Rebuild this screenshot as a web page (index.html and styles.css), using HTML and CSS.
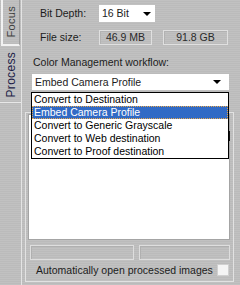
FILE: index.html
```html
<html lang="en">
<head>
    <meta charset="UTF-8">
    <title>Process</title>
    <link rel="stylesheet" href="styles.css">
</head>
<body>
    <div class="window">
        <div class="tabs">
            <div class="tab tab-focus"><span>Focus</span></div>
            <div class="tab tab-process"><span>Process</span></div>
        </div>

        <div class="panel">
            <div class="row bit-row">
                <label class="row-label">Bit Depth:</label>
                <div class="select small-select">16 Bit<i class="arrow"></i></div>
            </div>

            <div class="row size-row">
                <label class="row-label">File size:</label>
                <div class="readout readout-mb">46.9 MB</div>
                <div class="readout readout-gb">91.8 GB</div>
            </div>

            <div class="caption">Color Management workflow:</div>

            <div class="combo">
                <div class="select wide-select">Embed Camera Profile<i class="arrow"></i></div>
                <ul class="dropdown">
                    <li>Convert to Destination</li>
                    <li class="selected">Embed Camera Profile</li>
                    <li>Convert to Generic Grayscale</li>
                    <li>Convert to Web destination</li>
                    <li>Convert to Proof destination</li>
                </ul>
            </div>

            <div class="group">
                <div class="listbox"><span class="mark"></span></div>
                <div class="fields">
                    <div class="field field-left"></div>
                    <div class="field field-right"></div>
                </div>
                <div class="check-row">
                    <span>Automatically open processed images</span>
                    <span class="checkbox"></span>
                </div>
            </div>
        </div>
    </div>
</body>
</html>
```

FILE: styles.css
```css
body {
    margin: 0;
    font-family: "Liberation Sans", Arial, sans-serif;
    font-size: 10.5px;
    color: #1c1c1c;
    background: #bdbdbd;
}
.window {
    display: flex;
    width: 240px;
    height: 285px;
    overflow: hidden;
    background: repeating-linear-gradient(#c1c1c1 0 1px, #bbbbbb 1px 2px);
}
.tabs {
    width: 21px;
    flex: none;
    border-right: 1px solid #e4e4e4;
}
.tab {
    display: flex;
    align-items: center;
    justify-content: center;
    box-sizing: border-box;
}
.tab span {
    writing-mode: vertical-rl;
    transform: rotate(180deg);
    font-size: 11px;
    letter-spacing: 0.3px;
}
.tab-focus {
    height: 46px;
    margin-left: 1px;
    width: 19px;
    border-left: 2px solid #f2f2f2;
    border-bottom: 2px solid #f2f2f2;
    border-right: 1px solid #9c9c9c;
    color: #404040;
}
.tab-process {
    height: 57px;
    width: 21px;
    border-bottom: 1px solid #e8e8e8;
    color: #1e1e48;
    padding-top: 2px;
}
.tab-process span {
    font-size: 12px;
}
.panel {
    flex: 1;
    padding-top: 5px;
    position: relative;
}
.row {
    display: flex;
    align-items: center;
    padding-left: 18px;
    line-height: 13px;
}
.row-label {
    width: 59px;
    flex: none;
}
.bit-row {
    height: 17px;
}
.size-row {
    height: 15px;
    margin-top: 8px;
}
.select {
    position: relative;
    box-sizing: border-box;
    background: #fff;
    line-height: 13px;
    padding-left: 3px;
}
.small-select {
    width: 56px;
    height: 17px;
    padding-top: 2px;
}
.arrow {
    position: absolute;
    top: 7px;
    right: 4px;
    width: 0;
    height: 0;
    border-left: 4px solid transparent;
    border-right: 4px solid transparent;
    border-top: 4px solid #000;
}
.readout {
    box-sizing: border-box;
    height: 15px;
    border: 1px solid #e0e0e0;
    box-shadow: inset 1px 1px 0 #b2b2b2;
    text-align: center;
    line-height: 13px;
    color: #2a2a2a;
}
.readout-mb {
    width: 53px;
}
.readout-gb {
    width: 65px;
    margin-left: 11px;
}
.caption {
    margin-top: 11px;
    padding-left: 11px;
    line-height: 13px;
    height: 13px;
}
.combo {
    position: relative;
    margin-top: 5px;
    margin-left: 10px;
    width: 197px;
}
.wide-select {
    width: 197px;
    height: 16px;
    padding-top: 2px;
}
.wide-select .arrow {
    top: 6px;
    right: 8px;
}
.dropdown {
    position: absolute;
    top: 18px;
    left: -1px;
    z-index: 2;
    width: 198px;
    box-sizing: border-box;
    margin: 0;
    padding: 0;
    list-style: none;
    background: #fff;
    border: 1px solid #000;
}
.dropdown li {
    height: 13px;
    line-height: 13px;
    padding-left: 2px;
    color: #000;
}
.dropdown li.selected {
    background: #316ac5;
    color: #fff;
    outline: 1px dotted #e9a74a;
    outline-offset: -1px;
}
.group {
    position: relative;
    margin-top: 22px;
    margin-left: 3px;
    width: 209px;
    box-sizing: border-box;
    border: 1px solid #e2e2e2;
    padding: 1px 3px 4px 2px;
}
.listbox {
    position: relative;
    box-sizing: border-box;
    width: 202px;
    height: 126px;
    background: #fff;
    border: 1px solid #a4a4a4;
}
.mark {
    position: absolute;
    right: -1px;
    top: 16px;
    width: 2px;
    height: 10px;
    background: #111;
}
.fields {
    display: flex;
    gap: 5px;
    margin-top: 5px;
    padding-left: 2px;
}
.field {
    box-sizing: border-box;
    height: 15px;
    border: 1px solid #dedede;
    box-shadow: inset 1px 1px 0 #b0b0b0;
}
.field-left {
    width: 104px;
}
.field-right {
    width: 91px;
}
.check-row {
    display: flex;
    align-items: center;
    justify-content: space-between;
    height: 14px;
    margin-top: 3px;
    padding-left: 8px;
    padding-right: 1px;
    line-height: 13px;
}
.checkbox {
    width: 12px;
    height: 12px;
    box-sizing: border-box;
    background: #f4f4f4;
    border: 1px solid #d0d0d0;
}
```
